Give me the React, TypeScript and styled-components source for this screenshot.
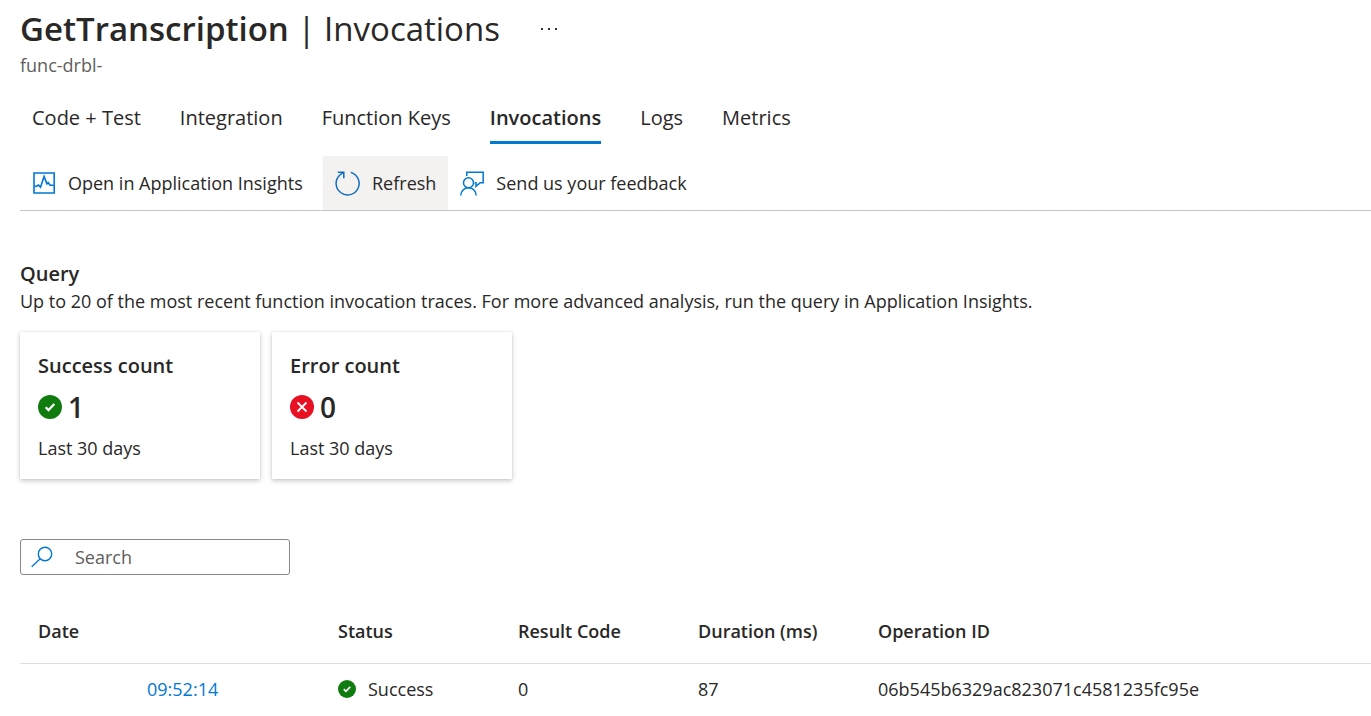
import React from "react";
import styled, { createGlobalStyle } from "styled-components";

const GlobalStyle = createGlobalStyle`
  * { box-sizing: border-box; }
  body {
    margin: 0;
    background: #fff;
    color: #292827;
    font-family: "Segoe UI", "Open Sans", "Noto Sans", sans-serif;
    font-size: 18px;
    line-height: 28px;
  }
  button, input { font: inherit; color: inherit; }
  h1, h2, h3, p { margin: 0; }
`;

const Page = styled.main`
  padding: 5px 0 0 20px;
`;

const TitleRow = styled.div`
  display: flex;
  align-items: center;
  gap: 36px;
`;

const Title = styled.h1`
  font-size: 33px;
  line-height: 48px;
  font-weight: 400;
  white-space: nowrap;

  strong { font-weight: 600; }
`;

const MoreButton = styled.button`
  display: flex;
  padding: 4px;
  border: 0;
  background: none;
`;

const Subtitle = styled.p`
  color: #605e5c;
  line-height: 24px;
`;

const Tabs = styled.nav`
  display: flex;
  gap: 39px;
  margin: 26px 0 12px 12px;
`;

const Tab = styled.a<{ $active?: boolean }>`
  padding-bottom: 8px;
  border-bottom: 3px solid ${(p) => (p.$active ? "#0078d4" : "transparent")};
  color: inherit;
  font-size: 20px;
  line-height: 30px;
  font-weight: ${(p) => (p.$active ? 600 : 400)};
  text-decoration: none;
  white-space: nowrap;
`;

const Toolbar = styled.div`
  display: flex;
  border-bottom: 1px solid #c8c6c4;
`;

const ToolButton = styled.button<{ $hover?: boolean; $minWidth?: number }>`
  display: flex;
  align-items: center;
  gap: 12px;
  height: 54px;
  min-width: ${(p) => p.$minWidth ?? 0}px;
  padding: 0 12px;
  border: 0;
  background: ${(p) => (p.$hover ? "#f3f2f1" : "transparent")};
  white-space: nowrap;
`;

const Section = styled.section`
  padding-top: 49px;
`;

const SectionTitle = styled.h2`
  font-size: 20px;
  line-height: 28px;
  font-weight: 600;
`;

const Description = styled.p`
  line-height: 26px;
`;

const Cards = styled.div`
  display: flex;
  gap: 12px;
  margin-top: 18px;
`;

const Card = styled.article`
  width: 240px;
  padding: 20px 18px 17px;
  background: #fff;
  box-shadow: 0 2px 5px rgba(0, 0, 0, 0.2), 0 0 2px rgba(0, 0, 0, 0.1);
`;

const CardTitle = styled.h3`
  font-size: 20px;
  line-height: 28px;
  font-weight: 600;
`;

const Count = styled.p`
  display: flex;
  align-items: center;
  gap: 6px;
  margin: 8px 0;
  font-size: 28px;
  line-height: 38px;
  font-weight: 600;
`;

const SearchBox = styled.label`
  display: flex;
  align-items: center;
  gap: 22px;
  width: 270px;
  height: 36px;
  margin-top: 60px;
  padding: 0 10px;
  border: 1px solid #8a8886;
  border-radius: 3px;
`;

const SearchInput = styled.input`
  flex: 1;
  min-width: 0;
  padding: 0;
  border: 0;
  outline: 0;
  background: none;

  &::placeholder { color: #605e5c; opacity: 1; }
`;

const Table = styled.table`
  width: 100%;
  margin-top: 24px;
  border-collapse: collapse;
  table-layout: fixed;
  text-align: left;

  th, td { padding: 0 18px; white-space: nowrap; }
  th { height: 64px; font-weight: 600; }
  td { height: 52px; }
  thead tr { border-bottom: 1px solid #e1dfdd; }
`;

const Column = styled.col<{ $width?: number }>`
  width: ${(p) => (p.$width ? `${p.$width}px` : "auto")};
`;

const DateCell = styled.td`
  && { padding-left: 127px; }
`;

const DateLink = styled.a`
  color: #0078d4;
  text-decoration: none;
`;

const Status = styled.span`
  display: flex;
  align-items: center;
  gap: 12px;
`;

const SuccessIcon = ({ size }: { size: number }) => (
  <svg width={size} height={size} viewBox="0 0 24 24" aria-hidden="true">
    <circle cx="12" cy="12" r="12" fill="#107c10" />
    <path d="M7.7 12.2l2.8 2.9 5.8-6" fill="none" stroke="#fff" strokeWidth="2.2" />
  </svg>
);

const ErrorIcon = () => (
  <svg width="24" height="24" viewBox="0 0 24 24" aria-hidden="true">
    <circle cx="12" cy="12" r="12" fill="#e81123" />
    <path d="M7.5 7.5l9 9M16.5 7.5l-9 9" stroke="#fff" strokeWidth="1.8" />
  </svg>
);

const InsightsIcon = () => (
  <svg width="24" height="24" viewBox="0 0 24 24" fill="none" stroke="#0078d4" aria-hidden="true">
    <path d="M2 2h20.2v20H2z" strokeWidth="1.6" />
    <path d="M2.5 15.4l2-.2 2-1.2 2 2.2 3.6-10.7 2.8 7.4 1.4-1.2 1.8 2.6h3.6" strokeWidth="1.6" />
  </svg>
);

const RefreshIcon = () => (
  <svg width="25" height="25" viewBox="0 0 25 25" fill="none" stroke="#0f6cbd" strokeWidth="1.5" aria-hidden="true">
    <path d="M15.8 1.4A11.5 11.5 0 1 1 4.6 4.2L8.4 1.4" />
    <path d="M2.8 1.3h6v5.9" />
  </svg>
);

const FeedbackIcon = () => (
  <svg width="24" height="25" viewBox="0 0 24 25" fill="none" stroke="#0078d4" strokeWidth="1.5" aria-hidden="true">
    <path d="M6.8 5V1.3h16.4v10.5h-3l-4.2 3.6v-3.6h-1.4" />
    <circle cx="8.5" cy="11.7" r="5" />
    <path d="M.8 24.6c0-4.6 3.4-7.9 7.7-7.9s7.7 3.3 7.7 7.9" />
  </svg>
);

const SearchIcon = () => (
  <svg width="22" height="22" viewBox="0 0 22 22" fill="none" stroke="#0078d4" strokeWidth="1.4" aria-hidden="true">
    <circle cx="14" cy="8" r="6.7" />
    <path d="M9.2 12.8L.7 20.8" />
  </svg>
);

const tabs = ["Code + Test", "Integration", "Function Keys", "Invocations", "Logs", "Metrics"];

export default function App() {
  return (
    <>
      <GlobalStyle />
      <Page>
        <TitleRow>
          <Title><strong>GetTranscription</strong> | Invocations</Title>
          <MoreButton aria-label="More">
            <svg width="18" height="4" viewBox="0 0 18 4" fill="#323130" aria-hidden="true">
              <path d="M1 1h2v2H1zM8 1h2v2H8zM15 1h2v2h-2z" />
            </svg>
          </MoreButton>
        </TitleRow>
        <Subtitle>func-drbl-</Subtitle>

        <Tabs>
          {tabs.map((t) => (
            <Tab key={t} href="#" $active={t === "Invocations"}>{t}</Tab>
          ))}
        </Tabs>

        <Toolbar>
          <ToolButton $minWidth={303}><InsightsIcon />Open in Application Insights</ToolButton>
          <ToolButton $hover $minWidth={124}><RefreshIcon />Refresh</ToolButton>
          <ToolButton><FeedbackIcon />Send us your feedback</ToolButton>
        </Toolbar>

        <Section>
          <SectionTitle>Query</SectionTitle>
          <Description>Up to 20 of the most recent function invocation traces. For more advanced analysis, run the query in Application Insights.</Description>
          <Cards>
            <Card>
              <CardTitle>Success count</CardTitle>
              <Count><SuccessIcon size={24} />1</Count>
              <p>Last 30 days</p>
            </Card>
            <Card>
              <CardTitle>Error count</CardTitle>
              <Count><ErrorIcon />0</Count>
              <p>Last 30 days</p>
            </Card>
          </Cards>
        </Section>

        <SearchBox>
          <SearchIcon />
          <SearchInput type="text" placeholder="Search" aria-label="Search" />
        </SearchBox>

        <Table>
          <colgroup>
            <Column $width={300} />
            <Column $width={180} />
            <Column $width={180} />
            <Column $width={180} />
            <Column />
          </colgroup>
          <thead>
            <tr>
              <th>Date</th>
              <th>Status</th>
              <th>Result Code</th>
              <th>Duration (ms)</th>
              <th>Operation ID</th>
            </tr>
          </thead>
          <tbody>
            <tr>
              <DateCell><DateLink href="#">09:52:14</DateLink></DateCell>
              <td><Status><SuccessIcon size={18} />Success</Status></td>
              <td>0</td>
              <td>87</td>
              <td>06b545b6329ac823071c4581235fc95e</td>
            </tr>
          </tbody>
        </Table>
      </Page>
    </>
  );
}
